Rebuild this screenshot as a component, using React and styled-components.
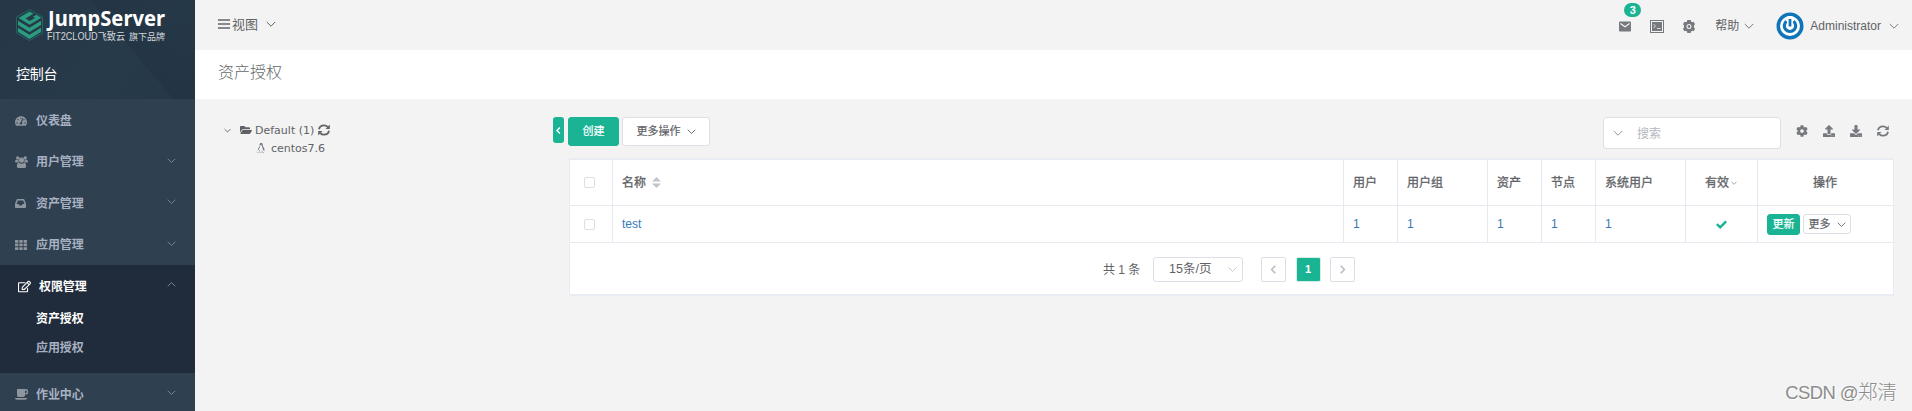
import React from 'react';
import styled, { createGlobalStyle } from 'styled-components';
import {
  FaTachometerAlt, FaRegEdit, FaFolderOpen, FaLinux,
  FaCog, FaUpload, FaDownload,
} from 'react-icons/fa';

const Global = createGlobalStyle`
  *, *::before, *::after { box-sizing: border-box; }
  body {
    margin: 0;
    background: #f3f3f3;
    color: #606266;
    font-family: "Liberation Sans", "Noto Sans CJK SC", sans-serif;
    font-size: 12px;
    line-height: 1;
    overflow: hidden;
  }
`;

const Page = styled.div`
  display: flex;
  height: 411px;
  overflow: hidden;
  position: relative;
`;

const Sidebar = styled.nav`
  width: 195px;
  flex: none;
  background: #2f4050;
  overflow: hidden;
`;

const Brand = styled.header`
  height: 99px;
  background:
    linear-gradient(50deg, transparent 62%, rgba(20, 34, 46, 0.16) 62.5%, rgba(20, 34, 46, 0.03) 100%),
    linear-gradient(125deg, #263847 0%, #273a4a 60%, #253848 100%);
`;

const LogoSvg = styled.svg`
  display: block;
  width: 195px;
  height: 50px;
`;

const ConsoleName = styled.div`
  padding: 16px 0 0 16px;
  color: #fff;
  font-size: 14px;
  letter-spacing: -0.3px;
  line-height: 17px;
`;

const Group = styled.div`
  background: ${(p) => (p.$open ? '#202c3b' : 'transparent')};
  padding-bottom: ${(p) => (p.$open ? '9px' : 0)};
`;

const MenuItem = styled.div`
  display: flex;
  align-items: center;
  height: ${(p) => (p.$open ? '41px' : '41.5px')};
  padding: 2px 19px 0 ${(p) => (p.$open ? 18 : 15)}px;
  color: ${(p) => (p.$open ? '#fff' : '#a7b1c2')};
  font-weight: bold;

  > svg { margin-top: -4px; }
`;

const MenuIcon = styled.span`
  display: flex;
  width: 21px;
  color: ${(p) => (p.$open ? '#fff' : '#8f959c')};
`;

const MenuLabel = styled.span`
  flex: 1;
  letter-spacing: -0.1px;
`;

const SubItem = styled.div`
  height: 29px;
  padding-left: 36px;
  line-height: 27px;
  font-weight: bold;
  letter-spacing: -0.1px;
  color: ${(p) => (p.$active ? '#fff' : '#a7b1c2')};
`;

const Main = styled.main`
  flex: 1;
  min-width: 0;
`;

const Topbar = styled.header`
  display: flex;
  align-items: center;
  justify-content: space-between;
  height: 50px;
  padding: 0 13px 0 23px;
`;

const ViewSwitch = styled.div`
  display: flex;
  align-items: center;
  font-size: 13px;
  margin-top: -2px;
`;

const UserTools = styled.div`
  display: flex;
  align-items: center;
  padding-top: 2px;
  color: #76797e;
`;

const Mail = styled.span`
  position: relative;
  display: flex;
  margin-right: 19px;
`;

const Badge = styled.span`
  position: absolute;
  left: 5px;
  top: -18px;
  width: 17px;
  height: 14px;
  border-radius: 7px;
  background: #1ab394;
  color: #fff;
  font-size: 11px;
  font-weight: bold;
  line-height: 15px;
  text-align: center;
`;

const ToolText = styled.span`
  color: #606266;
  margin-left: ${(p) => p.$left || 0}px;
  margin-right: ${(p) => p.$right || 0}px;
`;

const TitleBar = styled.div`
  height: 49px;
  padding: 0 23px;
  background: #fff;
  color: #676a6c;
  font-size: 16px;
  font-weight: 300;
  line-height: 46px;
`;

const Content = styled.div`
  display: flex;
  padding: 18px 18px 0 0;
`;

const Tree = styled.div`
  width: 358px;
  padding: 4px 0 0 29px;
  font-family: "DejaVu Sans", sans-serif;
  font-size: 11px;
  color: #606266;
`;

const TreeRow = styled.div`
  display: flex;
  align-items: center;
  height: 18px;
  padding-left: ${(p) => p.$indent || 0}px;
`;

const TreeText = styled.span`
  margin: 0 4px 0 ${(p) => p.$left || 3}px;
  padding-top: 1px;
`;

const Collapse = styled.div`
  display: flex;
  align-items: center;
  justify-content: center;
  width: 11px;
  height: 26px;
  margin-right: 4px;
  border-radius: 3px;
  background: #1ab394;
  color: #fff;
`;

const Panel = styled.section`
  flex: 1;
  min-width: 0;
`;

const ActionBar = styled.div`
  display: flex;
  height: 41px;
`;

const Button = styled.button`
  display: flex;
  align-items: center;
  justify-content: center;
  gap: 6px;
  width: ${(p) => p.$w}px;
  height: ${(p) => p.$h}px;
  margin: 0 3px 0 0;
  padding: 0;
  border: 1px solid ${(p) => (p.$primary ? '#1ab394' : '#dcdfe6')};
  border-radius: 3px;
  background: ${(p) => (p.$primary ? '#1ab394' : '#fff')};
  color: ${(p) => (p.$primary ? '#fff' : '#606266')};
  font: 400 11px/1 "Liberation Sans", "Noto Sans CJK SC", sans-serif;
  -webkit-text-stroke: 0.2px;
`;

const SearchBox = styled.div`
  display: flex;
  align-items: center;
  width: 178px;
  height: 32px;
  margin-left: auto;
  margin-right: 15px;
  padding: 0 8px;
  border: 1px solid #dcdfe6;
  border-radius: 3px;
  background: #fff;
`;

const Placeholder = styled.span`
  margin-left: 14px;
  padding-top: 2px;
  color: #b4b8c0;
`;

const TableTools = styled.div`
  display: flex;
  gap: 15px;
  padding: 8px 5px 0 0;
  color: #76797e;
`;

const Card = styled.div`
  margin-left: 2px;
  height: 138px;
  background: #fff;
  border: solid #e9edf3;
  border-width: 2px 1px 2px 0;
  box-shadow: -1px 0 0 #e9edf3;
`;

const Row = styled.div`
  display: grid;
  grid-template-columns: 43px 731px 54px 90px 54px 54px 90px 72px 1fr;
  height: ${(p) => p.$h}px;
  border-bottom: 1px solid #e6e9f0;
`;

const Cell = styled.div`
  display: flex;
  align-items: center;
  justify-content: ${(p) => (p.$center ? 'center' : 'flex-start')};
  padding-left: ${(p) => (p.$center ? 0 : 9)}px;
  padding-right: ${(p) => (p.$center ? 1 : 0)}px;
  border-right: 1px solid #e6e9f0;
  color: ${(p) => (p.$link ? '#337ab7' : '#606266')};
  -webkit-text-stroke: ${(p) => (p.$head ? '0.3px' : 0)};
  &:last-child { border-right: 0; }
`;

const Actions = styled(Cell)`
  padding-left: 9px;
`;

const Checkbox = styled.span`
  width: 11px;
  height: 11px;
  margin-right: 2px;
  border: 1px solid #dcdfe6;
  border-radius: 2px;
  background: #fff;
`;

const Pagination = styled.div`
  display: flex;
  align-items: center;
  height: 51px;
  padding-left: 533px;
  padding-top: 2px;
`;

const Total = styled.span`
  width: 50px;
`;

const PageSize = styled.div`
  display: flex;
  align-items: center;
  justify-content: space-between;
  width: 90px;
  height: 25px;
  margin-right: 18px;
  padding: 0 5px 0 15px;
  border: 1px solid #dcdfe6;
  border-radius: 3px;
  font-size: 12.5px;
`;

const PageButton = styled.span`
  display: flex;
  align-items: center;
  justify-content: center;
  width: 25px;
  height: 25px;
  margin-right: ${(p) => (p.$current ? 9 : 9.5)}px;
  border: 1px solid ${(p) => (p.$current ? '#d5eee8' : '#dcdfe6')};
  border-radius: 2px;
  background: ${(p) => (p.$current ? '#1ab394' : '#fff')};
  color: ${(p) => (p.$current ? '#fff' : '#b4b8c0')};
  font-size: 11px;
  font-weight: bold;
`;

const Watermark = styled.div`
  position: absolute;
  right: 15px;
  bottom: 7px;
  color: #8c8c8c;
  font-family: "Liberation Sans", "Noto Sans CJK SC", sans-serif;
  font-size: 19.5px;
  font-weight: 300;
  line-height: 22px;
  text-shadow: 1px 1px 0 #fff;
`;

const WatermarkLatin = styled.span`
  font-size: 18.5px;
  letter-spacing: -0.6px;
`;

const Glyph = styled.svg`
  display: block;
  flex: none;
  margin-left: ${(p) => p.$left || 0}px;
`;

const turns = { down: 0, left: 90, up: 180, right: 270 };

function Chevron({ size = 10, dir = 'down', left = 0, color = 'currentColor', stroke = 1 }) {
  return (
    <Glyph $left={left} width={size} height={size} viewBox="0 0 10 10" fill="none" stroke={color} strokeWidth={stroke}>
      <path d="M.8 3L5 7.200 9.200 3" transform={`rotate(${turns[dir]} 5 5)`} />
    </Glyph>
  );
}

function UsersIcon() {
  return (
    <svg width="13" height="12" viewBox="0 0 14 13" fill="currentColor">
      <circle cx="3" cy="2.2" r="1.9" />
      <circle cx="11" cy="2.2" r="1.9" />
      <path d="M0 6.600c0-1.800.6-2.600 1.600-2.600.8.500 1.600.6 2.200.4-.2 1.200.1 2 .6 2.700H1C.4 7.100 0 7 0 6.600zM14 6.600c0-1.800-.6-2.600-1.600-2.600-.8.500-1.600.6-2.200.4.2 1.200-.1 2-.6 2.700H13c.6 0 1-.1 1-.5z" />
      <circle cx="7" cy="4.400" r="2.800" />
      <path d="M4.200 7.200c1.700 1.500 3.900 1.500 5.600 0 1.600 0 2.200 1.800 2.200 3.800 0 1.200-.8 2-1.900 2H3.900C2.800 13 2 12.200 2 11c0-2 .6-3.800 2.200-3.800z" />
    </svg>
  );
}

function TrayIcon() {
  return (
    <svg width="11" height="9" viewBox="0 0 11 9" fill="currentColor">
      <path fillRule="evenodd" d="M2.300 0h6.400l.6.400L11 4.800v3.600l-.6.600H.6L0 8.400V4.800L1.700.4zM2.900 1.400L1.500 5h2l.9 1.500h2.200L7.500 5h2L8.100 1.400z" />
    </svg>
  );
}

function GridIcon() {
  return (
    <svg width="12" height="10" viewBox="0 0 12 10" fill="currentColor">
      {[0, 3.6, 7.2].map((y) => [0, 4.3, 8.6].map((x) => (
        <rect key={`${x}-${y}`} x={x} y={y} width="3.4" height="2.7" rx="0.3" />
      )))}
    </svg>
  );
}

function CupIcon() {
  return (
    <svg width="13" height="11" viewBox="0 0 13 11" fill="currentColor">
      <path fillRule="evenodd" d="M2 0h8.500a2.700 2.700 0 0 1 0 5.600H10v.6A1.800 1.800 0 0 1 8.200 8H3.800A1.800 1.800 0 0 1 2 6.200zM10 1.500v2.700h.4a1.300 1.300 0 0 0 0-2.700z" />
      <path d="M0 9h12c0 1-.8 1.700-1.800 1.700H1.800C.8 10.700 0 10 0 9z" />
    </svg>
  );
}

function CheckIcon() {
  return (
    <svg width="11" height="9" viewBox="0 0 11 9" fill="none" stroke="#1ab394" strokeWidth="2.500">
      <path d="M.9 4.200L4.200 7.300 10.100 1.300" />
    </svg>
  );
}

function RefreshIcon({ size = 12 }) {
  return (
    <svg width={size} height={size} viewBox="0 0 12 12" fill="none" stroke="currentColor" strokeWidth="1.800">
      <path d="M1 5.200C1.500 2.700 3.600 1.300 6 1.300c1.500 0 2.800.6 3.700 1.600M11 6.800c-.5 2.500-2.600 3.900-5 3.900-1.500 0-2.800-.6-3.700-1.600" />
      <path d="M11.800.6v4.300H7.500zM.2 11.400V7.100h4.300z" fill="currentColor" stroke="none" />
    </svg>
  );
}

function MenuBars() {
  return (
    <svg width="12" height="10" viewBox="0 0 12 10" fill="#85888c">
      <rect y="0" width="12" height="2" /><rect y="4" width="12" height="2" /><rect y="8" width="12" height="2" />
    </svg>
  );
}

function MailIcon() {
  return (
    <svg width="12" height="11" viewBox="0 0 13 11">
      <rect width="13" height="11" rx="1.2" fill="currentColor" />
      <path d="M1.500 2.200l5 3.500 5-3.500" fill="none" stroke="#f3f3f3" strokeWidth="1.300" />
    </svg>
  );
}

function TerminalIcon() {
  return (
    <svg width="14" height="13" viewBox="0 0 14 13">
      <rect x=".5" y=".5" width="13" height="12" fill="none" stroke="currentColor" />
      <rect x="2" y="2" width="10" height="9" fill="currentColor" />
      <path d="M3.500 4l2 2-2 2M7 8.500h3.500" fill="none" stroke="#d8d8d8" />
    </svg>
  );
}

function SettingsIcon() {
  return (
    <Glyph $left={19} width="12" height="13" viewBox="0 0 12 13" fill="currentColor">
      <path fillRule="evenodd" d="M4.300 0h3.400l.5 1.700 1 .6 1.500-.5L12 4.300l-1 1.200v2l1 1.200-1.300 2.500-1.500-.5-1 .6-.5 1.700H4.300l-.5-1.700-1-.6-1.500.5L0 8.700l1-1.200v-2L0 4.300l1.300-2.500 1.500.5 1-.6zM6 4a2.500 2.500 0 1 0 0 5 2.500 2.500 0 0 0 0-5z" />
      <circle cx="6" cy="6.500" r="1.400" />
    </Glyph>
  );
}

function Avatar() {
  return (
    <Glyph $left={22} width="28" height="28" viewBox="0 0 28 28">
      <circle cx="14" cy="14" r="13.500" fill="#0f74b8" />
      <circle cx="14" cy="14" r="10" fill="#fff" />
      <path d="M10.500 9.300a5.700 5.700 0 1 0 7 0" fill="none" stroke="#0f74b8" strokeWidth="3.200" />
      <path d="M14 4v10.500" stroke="#fff" strokeWidth="5" />
      <path d="M14 7v7.500" stroke="#0f74b8" strokeWidth="2.800" />
    </Glyph>
  );
}

function SortIcon() {
  return (
    <Glyph $left={6} width="9" height="11" viewBox="0 0 9 11" fill="#c0c4cc">
      <path d="M0 4.500L4.500 0 9 4.500zM0 6.500L4.500 11 9 6.500z" />
    </Glyph>
  );
}

function Logo() {
  return (
    <LogoSvg viewBox="0 0 195 50">
      <path d="M29.500 9.500l13 7.500v16l-13 7.500-13-7.500V17z" fill="none" stroke="#1f6860" strokeWidth="1" />
      <g fill="#2b9c7f">
        <path d="M29.500 11.500l4 2.300-8 4.600 4.200 2.500 5.300-3-2-1.200 3.300-1.900 5 3-11.600 6.900L18.500 18z" />
        <path d="M18 20.800l11.500 6.900L41 20.800v4.200l-11.500 6.900L18 25z" />
        <path d="M18 27.800l11.500 6.900L41 27.800V32l-11.500 6.900L18 32z" />
      </g>
      <text x="48" y="25.500" textLength="117" lengthAdjust="spacingAndGlyphs" fill="#fff" fontFamily="Noto Sans, sans-serif" fontWeight="700" fontSize="22">JumpServer</text>
      <text x="47" y="40.400" textLength="78" lengthAdjust="spacingAndGlyphs" fill="#d3d8dc" fontFamily="Liberation Sans, Noto Sans CJK SC, sans-serif" fontSize="10">FIT2CLOUD飞致云</text>
      <text x="129" y="40.400" textLength="36" lengthAdjust="spacingAndGlyphs" fill="#d3d8dc" fontFamily="Liberation Sans, Noto Sans CJK SC, sans-serif" fontSize="9.500">旗下品牌</text>
    </LogoSvg>
  );
}

const menu = [
  { label: '仪表盘', icon: <FaTachometerAlt size={12} /> },
  { label: '用户管理', icon: <UsersIcon />, more: true },
  { label: '资产管理', icon: <TrayIcon />, more: true },
  { label: '应用管理', icon: <GridIcon />, more: true },
  { label: '权限管理', icon: <FaRegEdit size={13} />, more: true, children: ['资产授权', '应用授权'] },
  { label: '作业中心', icon: <CupIcon />, more: true },
];

const counts = ['用户', '用户组', '资产', '节点', '系统用户'];

export default function App() {
  return (
    <Page>
      <Global />
      <Sidebar>
        <Brand>
          <Logo />
          <ConsoleName>控制台</ConsoleName>
        </Brand>
        {menu.map((m) => (
          <Group key={m.label} $open={!!m.children}>
            <MenuItem $open={!!m.children}>
              <MenuIcon $open={!!m.children}>{m.icon}</MenuIcon>
              <MenuLabel>{m.label}</MenuLabel>
              {m.more && <Chevron size={9} dir={m.children ? 'up' : 'down'} color="#7d8a99" />}
            </MenuItem>
            {m.children && m.children.map((c, i) => <SubItem key={c} $active={i === 0}>{c}</SubItem>)}
          </Group>
        ))}
      </Sidebar>
      <Main>
        <Topbar>
          <ViewSwitch>
            <MenuBars />
            <ToolText $left={2}>视图</ToolText>
            <Chevron left={8} />
          </ViewSwitch>
          <UserTools>
            <Mail><MailIcon /><Badge>3</Badge></Mail>
            <TerminalIcon />
            <SettingsIcon />
            <ToolText $left={20}>帮助</ToolText>
            <Chevron left={5} />
            <Avatar />
            <ToolText $left={6} $right={8}>Administrator</ToolText>
            <Chevron />
          </UserTools>
        </Topbar>
        <TitleBar>资产授权</TitleBar>
        <Content>
          <Tree>
            <TreeRow>
              <Chevron size={7} stroke={1.3} />
              <Glyph as={FaFolderOpen} $left={9} size={12} />
              <TreeText>Default (1)</TreeText>
              <RefreshIcon />
            </TreeRow>
            <TreeRow $indent={32}>
              <FaLinux size={10} />
              <TreeText $left={5}>centos7.6</TreeText>
            </TreeRow>
          </Tree>
          <Collapse><Chevron size={7} dir="left" stroke={2} /></Collapse>
          <Panel>
            <ActionBar>
              <Button $primary $w={51} $h={29}>创建</Button>
              <Button $w={88} $h={29}>更多操作<Chevron size={9} /></Button>
              <SearchBox><Chevron left={1} color="#909399" /><Placeholder>搜索</Placeholder></SearchBox>
              <TableTools>
                <FaCog size={12} /><FaUpload size={12} /><FaDownload size={12} /><RefreshIcon />
              </TableTools>
            </ActionBar>
            <Card>
              <Row $h={46}>
                <Cell $center><Checkbox /></Cell>
                <Cell $head>名称<SortIcon /></Cell>
                {counts.map((c) => <Cell $head key={c}>{c}</Cell>)}
                <Cell $head $center>有效<Chevron size={6} left={2} color="#909399" stroke={1.4} /></Cell>
                <Cell $head $center>操作</Cell>
              </Row>
              <Row $h={37}>
                <Cell $center><Checkbox /></Cell>
                <Cell $link>test</Cell>
                {counts.map((c) => <Cell $link key={c}>1</Cell>)}
                <Cell $center><CheckIcon /></Cell>
                <Actions>
                  <Button $primary $w={33} $h={21}>更新</Button>
                  <Button $w={48} $h={20}>更多<Chevron size={9} /></Button>
                </Actions>
              </Row>
              <Pagination>
                <Total>共 1 条</Total>
                <PageSize>15条/页<Chevron size={9} color="#c0c4cc" /></PageSize>
                <PageButton><Chevron size={9} dir="left" stroke={1.6} /></PageButton>
                <PageButton $current>1</PageButton>
                <PageButton><Chevron size={9} dir="right" stroke={1.6} /></PageButton>
              </Pagination>
            </Card>
          </Panel>
        </Content>
      </Main>
      <Watermark><WatermarkLatin>CSDN @</WatermarkLatin>郑清</Watermark>
    </Page>
  );
}
